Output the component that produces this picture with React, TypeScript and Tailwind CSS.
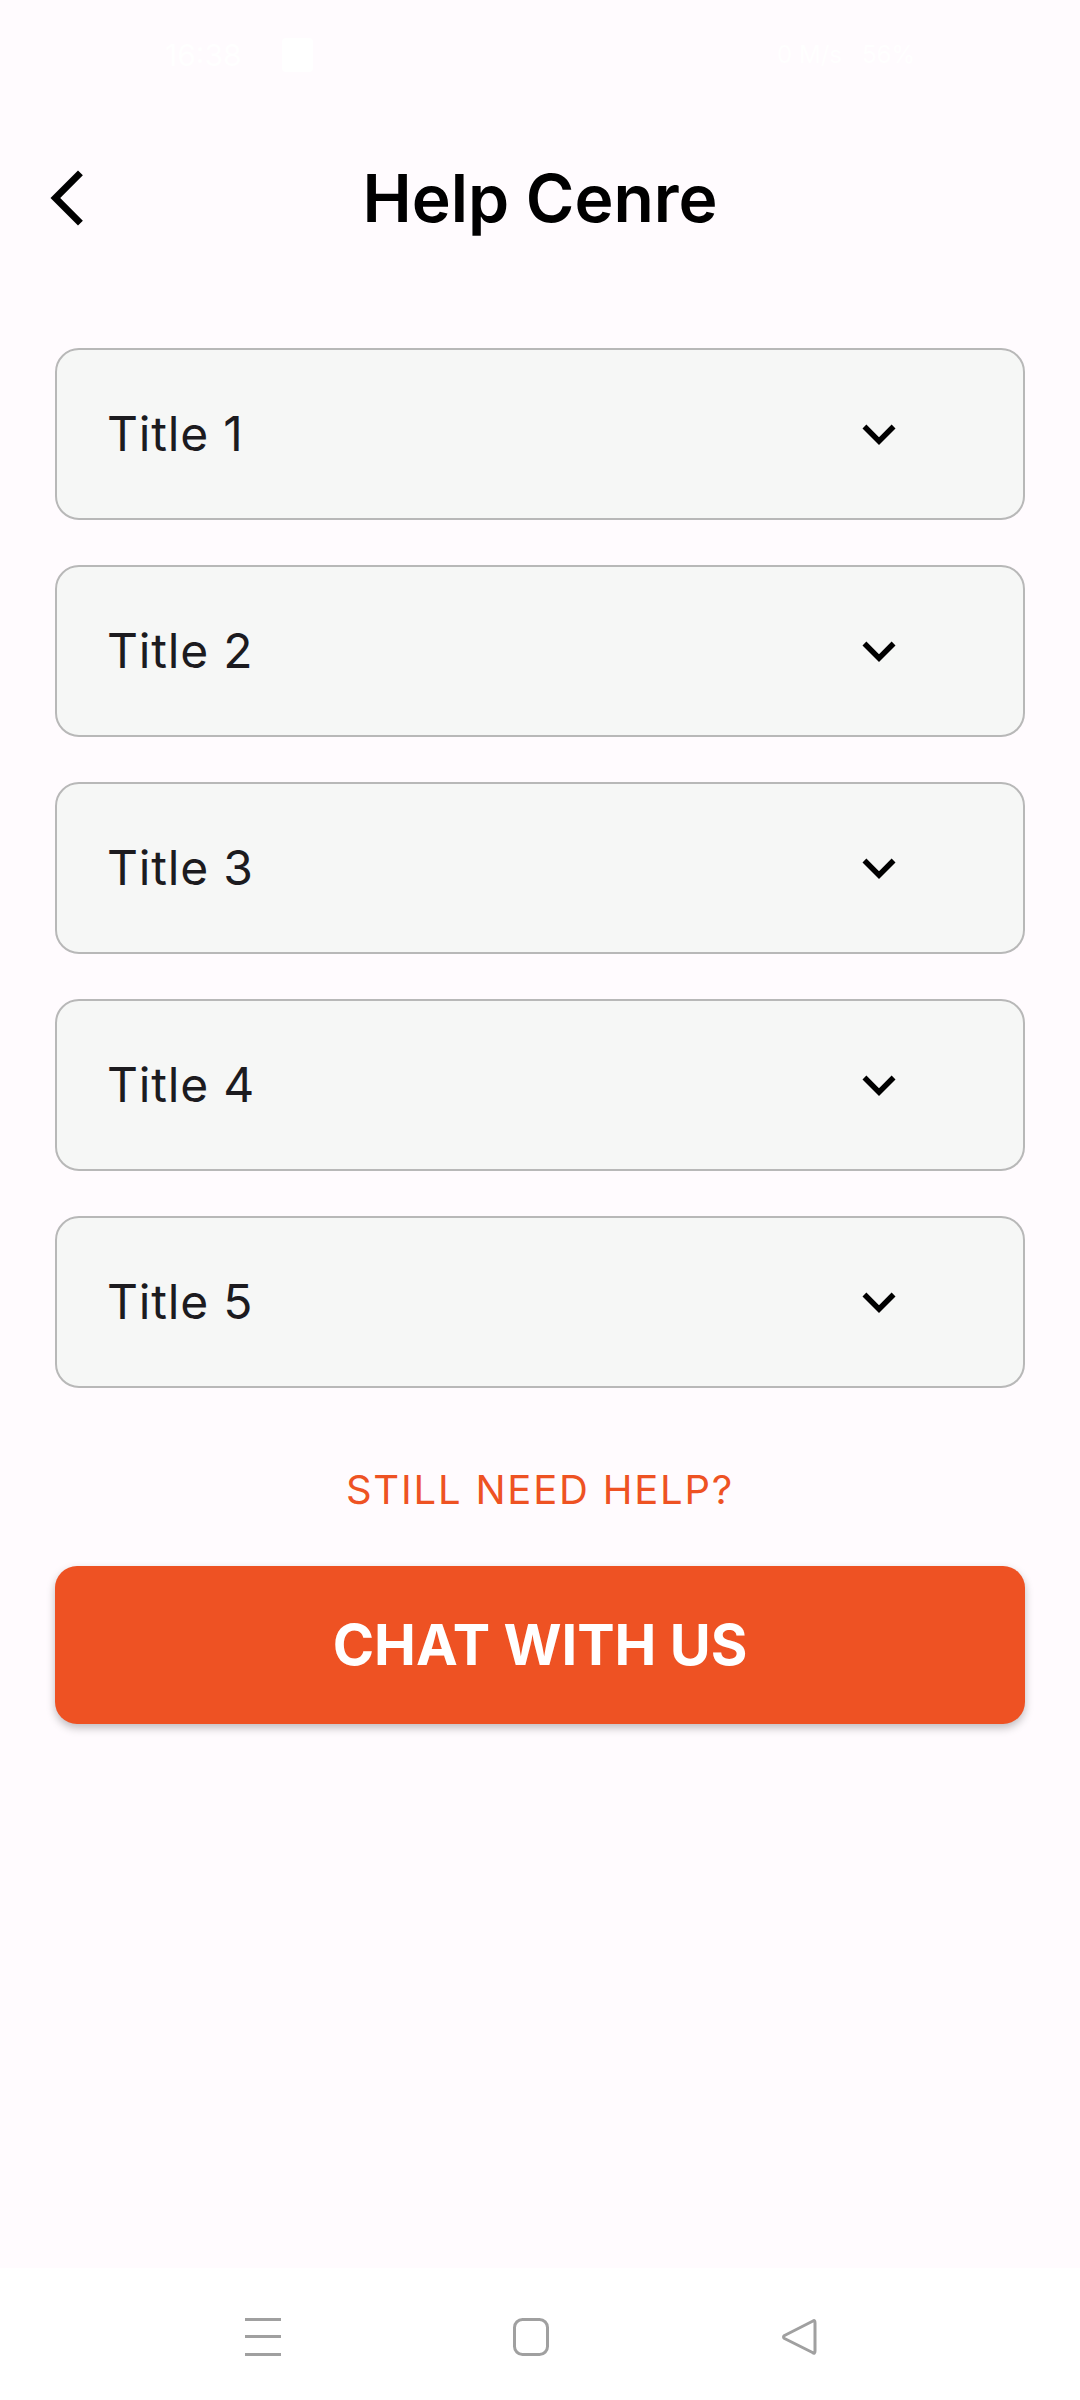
import React from "react";

function BackIcon() {
  return (
    <svg width="66" height="66" viewBox="0 0 24 24" fill="#000">
      <path d="M17.77 3.77L16 2 6 12l10 10 1.77-1.77L9.54 12z" />
    </svg>
  );
}

function ExpandMore() {
  return (
    <svg width="66" height="66" viewBox="0 0 24 24" fill="#000">
      <path d="M16.59 8.59L12 13.17 7.41 8.59 6 10l6 6 6-6z" />
    </svg>
  );
}

function Card({ title }: { title: string }) {
  return (
    <div className="h-[172px] rounded-[24px] border-2 border-[#b8b8b8] bg-[#f6f7f6] flex items-center justify-between pl-[50px] pr-[111px]">
      <span className="text-[48px] leading-none text-[#1c1b1f] font-normal tracking-[0.8px]">{title}</span>
      <ExpandMore />
    </div>
  );
}

export default function App() {
  const titles = ["Title 1", "Title 2", "Title 3", "Title 4", "Title 5"];
  return (
    <div
      className="w-[1080px] h-[2400px] bg-[#fffbfe] flex flex-col"
      style={{ fontFamily: "Inter, 'Noto Sans', sans-serif" }}
    >
      {/* status bar (white content) */}
      <div className="h-[110px] flex items-center justify-between px-[165px] text-white text-[30px]">
        <div className="flex items-center gap-[40px]">
          <span>16:38</span>
          <span className="w-[31px] h-[34px] rounded-[4px] bg-white" />
        </div>
        <div className="flex items-center gap-[20px] text-[24px]">
          <span>0 M/s</span>
          <span>56%</span>
        </div>
      </div>

      {/* header */}
      <div className="h-[176px] grid grid-cols-[1fr_auto_1fr] items-center">
        <div className="pl-[34px] flex items-center">
          <BackIcon />
        </div>
        <h1 className="text-[66px] leading-none font-semibold text-black">Help Cenre</h1>
        <div />
      </div>

      {/* cards */}
      <div className="mt-[62px] px-[55px] flex flex-col gap-[45px]">
        {titles.map((t) => (
          <Card key={t} title={t} />
        ))}
      </div>

      <div className="mt-[82px] text-center text-[40px] leading-[40px] text-[#ee5223] tracking-[1.8px]">
        STILL NEED HELP?
      </div>

      <div className="mt-[56px] mx-[55px]">
        <button className="w-full h-[158px] rounded-[22px] bg-[#ee5223] shadow-[0_4px_8px_rgba(0,0,0,0.25)] text-white text-[56px] font-bold leading-none">
          CHAT WITH US
        </button>
      </div>

      <div className="flex-1" />

      {/* nav bar */}
      <div className="h-[132px] bg-white flex items-start justify-center pt-[50px] pr-[18px]">
        <div className="flex items-center gap-[232px]">
          <svg width="36" height="38" viewBox="0 0 36 38">
            <rect x="0" y="0" width="36" height="3" fill="#a0a0a0" />
            <rect x="0" y="17" width="36" height="3" fill="#a0a0a0" />
            <rect x="0" y="35" width="36" height="3" fill="#a0a0a0" />
          </svg>
          <svg width="36" height="38" viewBox="0 0 36 38">
            <rect x="1.5" y="1.5" width="33" height="35" rx="8" fill="none" stroke="#a0a0a0" strokeWidth="3" />
          </svg>
          <svg width="36" height="38" viewBox="0 0 36 38">
            <path d="M32 3 Q34 1.5 34 5 L34 33 Q34 36.5 31.5 34.5 L3.5 20.5 Q1.5 19 3.5 17.5 Z" fill="none" stroke="#a0a0a0" strokeWidth="3" strokeLinejoin="round" />
          </svg>
        </div>
      </div>
    </div>
  );
}
